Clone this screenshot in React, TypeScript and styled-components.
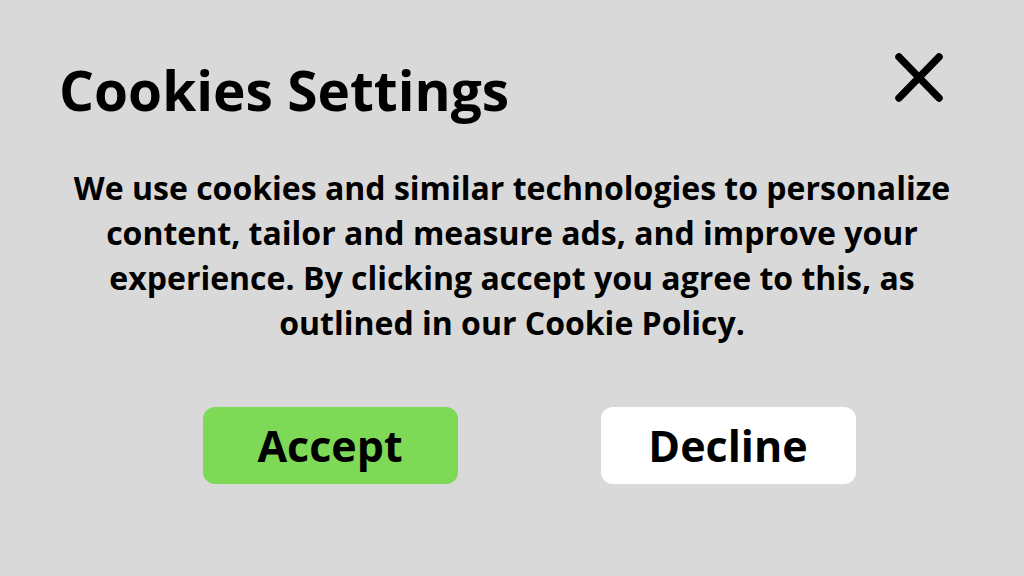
import React from "react"
import styled, { createGlobalStyle } from "styled-components"

const GlobalStyle = createGlobalStyle`
  html, body {
    margin: 0;
    padding: 0;
    background: #d9d9d9;
    font-family: "Open Sans", "Liberation Sans", sans-serif;
  }
`

const CloseIcon = () => (
  <svg width="48" height="49" viewBox="0 0 48 49" fill="none">
    <path
      d="M4 4 L44 45 M44 4 L4 45"
      stroke="#000"
      strokeWidth="7.5"
      strokeLinecap="round"
    />
  </svg>
)

const App = () => {
  return (
    <Page>
      <GlobalStyle />
      <Header>
        <Title>Cookies Settings</Title>
        <CloseButton aria-label="Close">
          <CloseIcon />
        </CloseButton>
      </Header>
      <Message>
        We use cookies and similar technologies to personalize content, tailor
        and measure ads, and improve your experience. By clicking accept you
        agree to this, as outlined in our Cookie Policy.
      </Message>
      <Actions>
        <ActionButton $variant="accept">Accept</ActionButton>
        <ActionButton $variant="decline">Decline</ActionButton>
      </Actions>
    </Page>
  )
}

const Page = styled.main`
  width: 1024px;
  height: 576px;
  box-sizing: border-box;
  background: #d9d9d9;
  display: flex;
  flex-direction: column;
  align-items: center;
  padding: 53px 0 0 0;
`
const Header = styled.div`
  width: 100%;
  box-sizing: border-box;
  display: flex;
  justify-content: space-between;
  align-items: flex-start;
  padding: 0 81px 0 59px;
`
const Title = styled.h1`
  margin: 9px 0 0 0;
  font-size: 55px;
  font-weight: 700;
  line-height: 55px;
  color: #000;
`
const CloseButton = styled.button`
  background: none;
  border: none;
  padding: 0;
  display: flex;
  cursor: pointer;
`
const Message = styled.p`
  margin: 48px 0 0 0;
  width: 900px;
  text-align: center;
  font-size: 32px;
  font-weight: 700;
  line-height: 45px;
  color: #000;
`
const Actions = styled.div`
  display: flex;
  gap: 143px;
  margin: 62px 0 0 34px;
`
const ActionButton = styled.button<{ $variant: "accept" | "decline" }>`
  width: 255px;
  height: 77px;
  padding: 0;
  border: none;
  border-radius: 12px;
  background: ${(p) => (p.$variant === "accept" ? "#7ed957" : "#ffffff")};
  font-family: "Open Sans", "Liberation Sans", sans-serif;
  font-size: 43px;
  font-weight: 700;
  color: #000;
  cursor: pointer;
`

export default App
